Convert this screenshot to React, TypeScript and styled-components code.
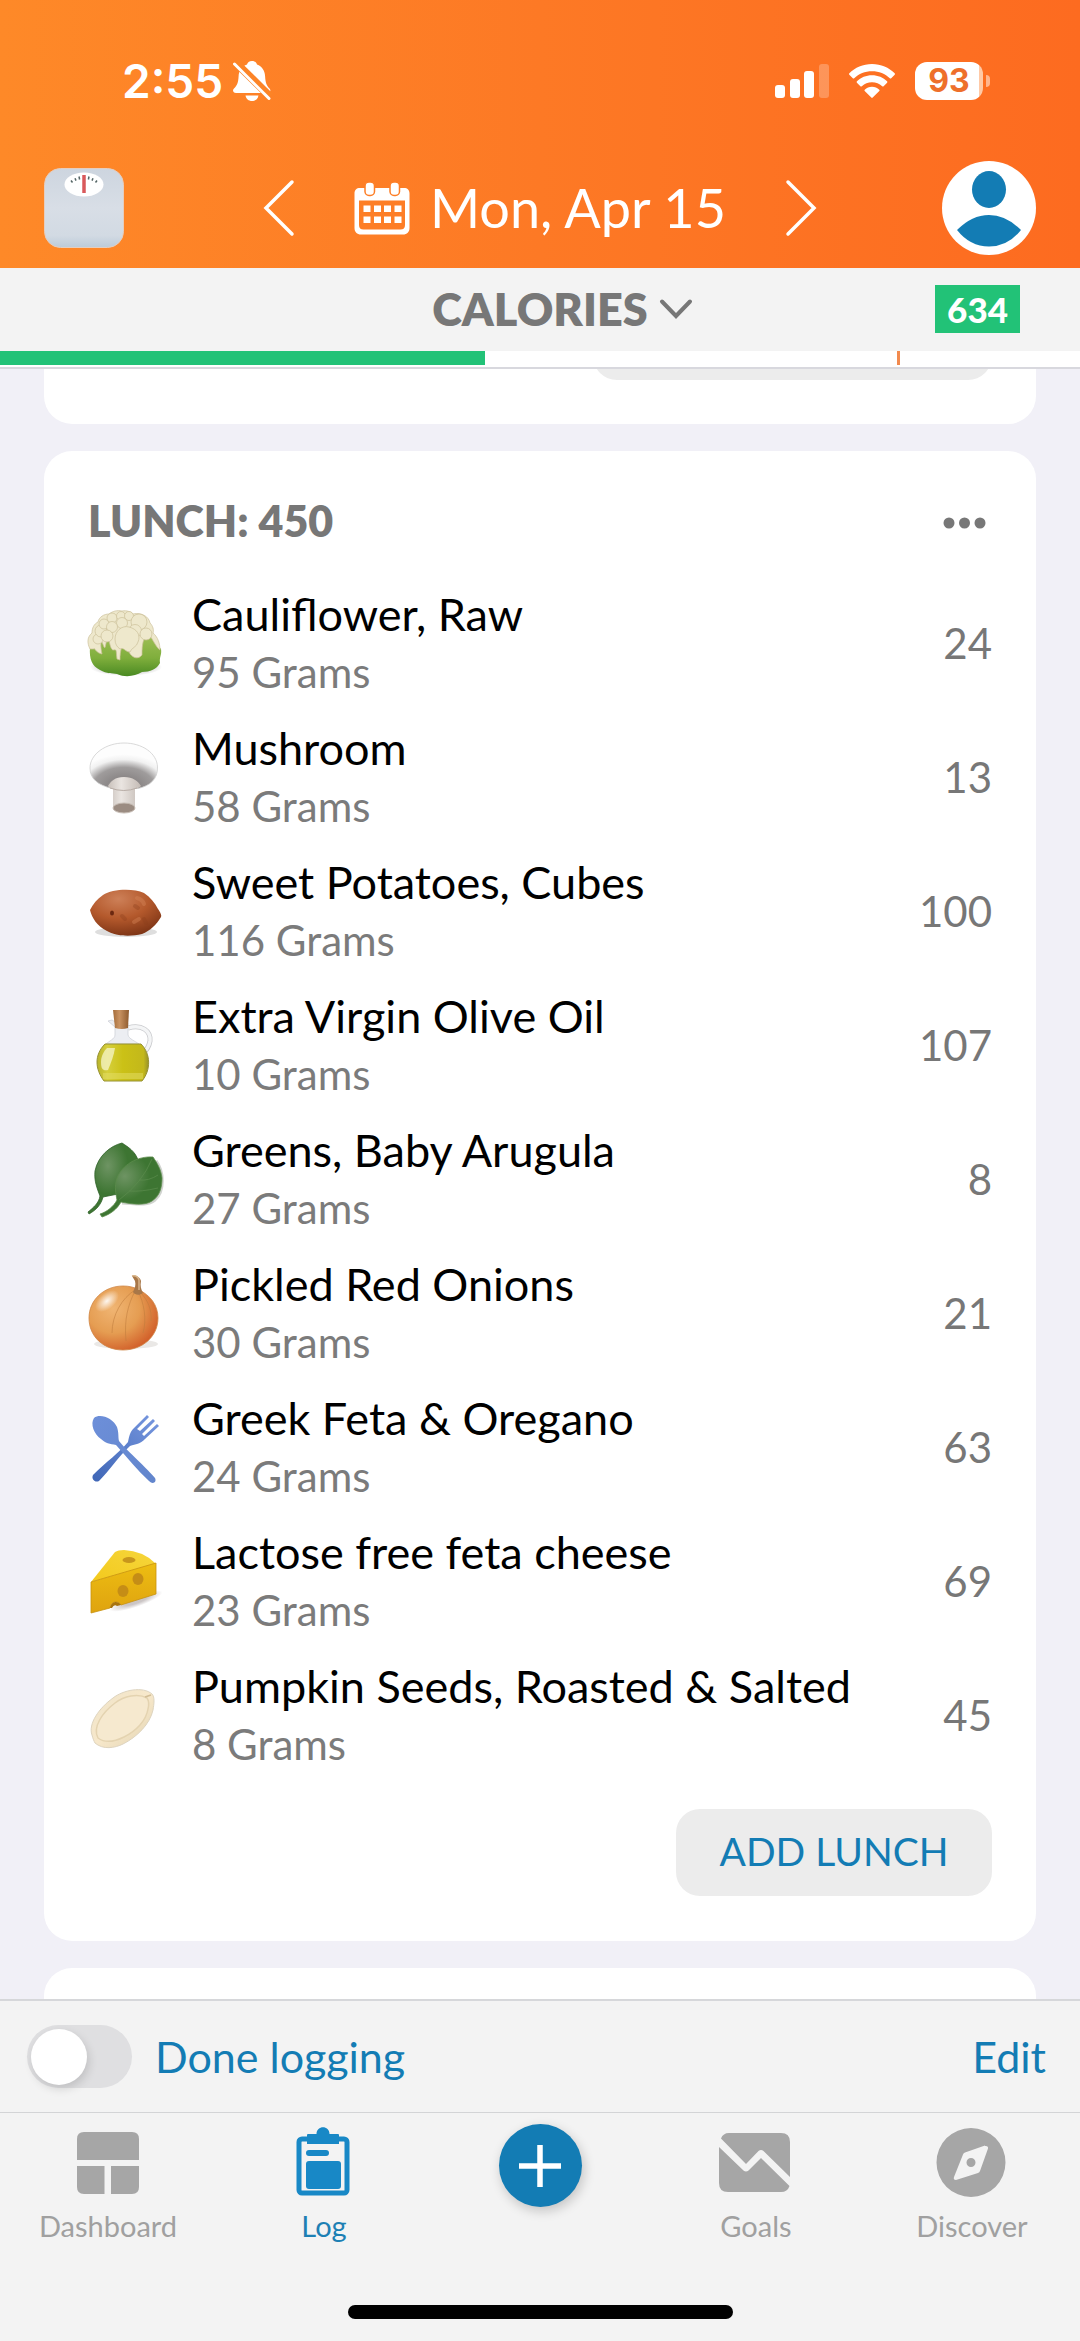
import React from "react";
import styled, { createGlobalStyle } from "styled-components";

const blue = "#137cb4";
const green = "#22c277";

const GlobalStyle = createGlobalStyle`
  *, *::before, *::after { box-sizing: border-box; }
  body { margin: 0; background: #f1f0f7; font-family: Lato, "Open Sans", sans-serif; color: #000; }
  button { font: inherit; color: inherit; border: 0; padding: 0; background: none; cursor: pointer; }
  svg { display: block; flex: none; overflow: visible; }
`;

const Screen = styled.div`
  height: 100vh;
  display: flex;
  flex-direction: column;
  overflow: hidden;
`;

const Header = styled.header`
  background: linear-gradient(90deg, #fe8928 0%, #fd7925 50%, #fd6b20 100%);
  color: #fff;
`;

const StatusBar = styled.div`
  display: flex;
  align-items: center;
  justify-content: space-between;
  height: 161px;
  padding: 0 90px 0 122px;
`;

const Clock = styled.div`
  display: flex;
  align-items: center;
  gap: 10px;
  font-family: Inter, sans-serif;
  font-size: 46px;
  font-weight: 600;
  line-height: 56px;
`;

const StatusIcons = styled.div`
  display: flex;
  align-items: center;
  gap: 20px;
`;

const Battery = styled.div`
  display: flex;
  align-items: center;
  gap: 3px;
`;

const BatteryBody = styled.div`
  width: 68px;
  height: 38px;
  border-radius: 12px;
  background: linear-gradient(90deg, #fff 94%, #ffc9a6 94%);
  color: #ee6f2b;
  font: 700 32px/38px Inter, sans-serif;
  text-align: center;
`;

const BatteryTip = styled.div`
  width: 4px;
  height: 12px;
  border-radius: 0 6px 6px 0;
  background: #ffb58d;
`;

const NavRow = styled.div`
  display: grid;
  grid-template-columns: 1fr auto 1fr;
  align-items: center;
  height: 107px;
  padding: 0 44px 14px;
`;

const DateNav = styled.div`
  display: flex;
  align-items: center;
  gap: 60px;
`;

const DateButton = styled.button`
  display: flex;
  align-items: center;
  gap: 20px;
  font-size: 54px;
  line-height: 60px;
`;

const ProfileButton = styled.button`
  justify-self: end;
`;

const SummaryBar = styled.section`
  background: #f3f3f3;
`;

const SummaryRow = styled.div`
  display: grid;
  grid-template-columns: 1fr auto 1fr;
  align-items: center;
  height: 83px;
  padding: 0 60px 2px;
`;

const MetricButton = styled.button`
  grid-column: 2;
  display: flex;
  align-items: center;
  gap: 12px;
  margin-left: 44px;
  color: #777;
  font-size: 45px;
  font-weight: 800;
  line-height: 52px;
`;

const Badge = styled.span`
  justify-self: end;
  padding: 0 12px;
  background: ${green};
  color: #fff;
  font-size: 35px;
  font-weight: 900;
  line-height: 48px;
`;

const Track = styled.div`
  position: relative;
  height: 18px;
  background: #fff;
  border-bottom: 2px solid #d8d8de;
`;

const TrackFill = styled.div`
  height: 14px;
  background: ${green};
`;

const TrackMark = styled.span`
  position: absolute;
  top: 0;
  width: 3px;
  height: 14px;
  background: #f28a4e;
`;

const Feed = styled.main`
  flex: 1;
  min-height: 0;
  display: flex;
  flex-direction: column;
  gap: 27px;
  padding: 0 44px;
  overflow: hidden;
`;

const Card = styled.section`
  flex: none;
  padding: 46px 44px 45px;
  border-radius: 28px;
  background: #fff;
`;

const ScrolledCard = styled(Card)`
  margin-top: -76px;
  padding-top: 0;
  padding-bottom: 44px;
`;

const NextCard = styled(Card)`
  min-height: 120px;
`;

const CardHead = styled.div`
  display: flex;
  align-items: center;
  justify-content: space-between;
  height: 48px;
  margin-bottom: 31px;
`;

const CardTitle = styled.h2`
  margin: 0;
  color: #777;
  font-size: 43px;
  font-weight: 800;
  line-height: 48px;
`;

const MoreButton = styled.button`
  padding: 4px 6px 0;
`;

const FoodList = styled.ul`
  margin: 0 0 27px;
  padding: 0;
  list-style: none;
`;

const FoodRow = styled.li`
  display: flex;
  align-items: center;
  gap: 28px;
  height: 134px;
`;

const FoodText = styled.div`
  flex: 1;
  min-width: 0;
`;

const FoodName = styled.div`
  font-size: 45px;
  line-height: 58px;
`;

const FoodAmount = styled.div`
  color: #7b7b7b;
  font-size: 42px;
  line-height: 58px;
`;

const FoodCalories = styled.div`
  color: #777;
  font-size: 42px;
  line-height: 58px;
`;

const CardActions = styled.div`
  display: flex;
  justify-content: flex-end;
`;

const AddButton = styled.button`
  min-width: 316px;
  height: 87px;
  padding: 0 36px 3px;
  border-radius: 24px;
  background: #ececec;
  color: ${blue};
  font-size: 39px;
  line-height: 48px;
`;

const AddButtonEdge = styled.div`
  width: 40%;
  min-width: 399px;
  height: 87px;
  border-radius: 24px;
  background: #ececec;
`;

const Footer = styled.footer`
  background: #f3f3f3;
`;

const LoggingBar = styled.div`
  display: flex;
  align-items: center;
  justify-content: space-between;
  height: 113px;
  padding: 0 34px 0 27px;
  border-top: 2px solid #d6d7da;
  color: ${blue};
  font-size: 43px;
  line-height: 52px;
`;

const ToggleLabel = styled.label`
  display: flex;
  align-items: center;
  gap: 23px;
`;

const Toggle = styled.input`
  appearance: none;
  display: flex;
  align-items: center;
  width: 105px;
  height: 63px;
  margin: 0;
  padding: 4px;
  border-radius: 32px;
  background: #dfdfe1;

  &::before {
    content: "";
    width: 56px;
    height: 56px;
    border-radius: 50%;
    background: #fff;
    box-shadow: 2px 4px 10px rgba(0, 0, 0, 0.14);
  }

  &:checked {
    justify-content: flex-end;
    background: ${green};
  }
`;

const TabBar = styled.nav`
  display: grid;
  grid-template-columns: repeat(5, 1fr);
  height: 193px;
  border-top: 1px solid #d3d4d6;
`;

const Tab = styled.a<{ $active?: boolean }>`
  display: flex;
  flex-direction: column;
  align-items: center;
  gap: 14px;
  padding-top: 9px;
  color: ${(p) => (p.$active ? "#1888c6" : "#a6a6a6")};
  font-size: 29px;
  line-height: 36px;
  text-decoration: none;
`;

const TabLabel = styled.span<{ $active?: boolean }>`
  color: ${(p) => (p.$active ? "#1d80b4" : "#a0a0a0")};
`;

const PlusButton = styled.button`
  justify-self: center;
  display: grid;
  place-items: center;
  width: 83px;
  height: 83px;
  margin-top: 11px;
  border-radius: 50%;
  background: ${blue};
  box-shadow: 2px 4px 12px rgba(0, 0, 0, 0.2);
`;

const HomeIndicator = styled.div`
  width: 385px;
  height: 14px;
  margin: 0 auto 22px;
  border-radius: 7px;
  background: #000;
`;

const BellOff = () => (
  <svg width="38" height="40" viewBox="0 0 38 40" aria-hidden="true">
    <path d="M19 0c2.800 0 4.600 1.500 5 3.600 5 1.800 7.800 6 8.100 11.600.3 6.500 1.500 9.200 4.400 12.300.8.900 1 1.700.8 2.600-.3 1.200-1.300 1.900-2.800 1.900H3c-1.600 0-2.600-.7-2.900-1.900-.2-.9 0-1.700.9-2.600 3-3.100 4.300-5.800 4.600-12.300C5.900 9.600 9 5.400 14 3.600 14.400 1.500 16.200 0 19 0Z" fill="#fff" />
    <path d="M12.500 34.500h13c-.6 3.400-3 5.500-6.500 5.500s-5.900-2.100-6.500-5.500Z" fill="#fff" />
    <path d="M2 1 37 35.500" stroke="#fc8427" strokeWidth="8" />
    <path d="M1.500 3 36 37.500" stroke="#fff" strokeWidth="3" strokeLinecap="round" />
  </svg>
);

const Signal = () => (
  <svg width="54" height="34" viewBox="0 0 54 34" fill="#fff" aria-hidden="true">
    <rect x="0" y="21" width="10" height="13" rx="3" />
    <rect x="15" y="15" width="10" height="19" rx="3" />
    <rect x="29" y="7" width="10" height="27" rx="3" />
    <rect x="44" y="0" width="10" height="34" rx="3" opacity="0.25" />
  </svg>
);

const Wifi = () => (
  <svg width="46" height="34" viewBox="0 0 46 34" fill="#fff" aria-hidden="true">
    <path d="M23 0c9 0 17 3.500 22.700 9.300.4.400.4 1 0 1.400l-3.500 3.500c-.4.400-1 .4-1.400 0C36.200 9.800 30 7.200 23 7.200S9.800 9.800 5.200 14.200c-.4.400-1 .4-1.400 0L.3 10.700c-.4-.4-.4-1 0-1.400C6 3.500 14 0 23 0Z" />
    <path d="M23 11.300c5.900 0 11.200 2.300 15.100 6 .4.400.4 1 0 1.400l-3.500 3.500c-.4.400-1 .4-1.400 0A15 15 0 0 0 23 18.300a15 15 0 0 0-10.200 3.900c-.4.400-1 .4-1.400 0l-3.500-3.500c-.4-.4-.4-1 0-1.400 3.900-3.700 9.200-6 15.100-6Z" />
    <path d="M23 22.800c2.800 0 5.400 1.100 7.300 2.900.4.400.4.900 0 1.300l-6.600 6.600c-.4.400-1 .4-1.400 0L15.700 27c-.4-.4-.4-.9 0-1.300 1.900-1.800 4.500-2.900 7.300-2.900Z" />
  </svg>
);

const ScaleIcon = () => (
  <svg width="80" height="80" viewBox="0 0 80 80" aria-hidden="true">
    <defs>
      <linearGradient id="scaleBody" x1="0" y1="0" x2="0" y2="1">
        <stop offset="0" stopColor="#cdd5df" />
        <stop offset="0.5" stopColor="#d8dee6" />
        <stop offset="0.85" stopColor="#d2dae3" />
        <stop offset="1" stopColor="#bccbd9" />
      </linearGradient>
    </defs>
    <rect x="0.500" y="0.500" width="79" height="79" rx="16" fill="url(#scaleBody)" stroke="#e6cdbd" />
    <ellipse cx="40" cy="16.500" rx="19.500" ry="12" fill="#fff" />
    <path d="M27 12.500l1.500 2M31 10.200l1 2.400M35 8.500l.6 3M53 12.500l-1.500 2M49 10.200l-1 2.400M45 8.500l-.6 3" stroke="#566" strokeWidth="1.500" />
    <path d="M40 7v18" stroke="#d9595b" strokeWidth="3.500" />
  </svg>
);

const Chevron = ({ flip }: { flip?: boolean }) => (
  <svg width="30" height="56" viewBox="0 0 30 56" aria-hidden="true">
    <path d={flip ? "M2 2 28 28 2 54" : "M28 2 2 28 28 54"} fill="none" stroke="#fff" strokeWidth="3.500" strokeLinecap="round" />
  </svg>
);

const CalendarIcon = () => (
  <svg width="56" height="53" viewBox="0 0 56 53" aria-hidden="true">
    <path fillRule="evenodd" d="M6 6h44c3.500 0 5.500 2 5.500 5.500V46c0 4-2.500 6.500-6.500 6.500H7C3 52.500.5 50 .5 46V11.500C.5 8 2.500 6 6 6ZM5 18.500V43c0 3 1.500 4.500 4.500 4.500h37c3 0 4.500-1.500 4.500-4.500V18.500Z" fill="#fff" />
    <g fill="#fff" stroke="#fd7e26" strokeWidth="1.500">
      <rect x="11" y="0" width="9.500" height="13.500" rx="4" />
      <rect x="36" y="0" width="9.500" height="13.500" rx="4" />
    </g>
    <path d="M9.500 23.500h7v6.500h-7zM20 23.500h7v6.500h-7zM30 23.500h7v6.500h-7zM40.500 23.500h7v6.500h-7zM9.500 34.500h7V41h-7zM20 34.500h7V41h-7zM30 34.500h7V41h-7zM40.500 34.500h7V41h-7z" fill="#fff" />
  </svg>
);

const AvatarIcon = () => (
  <svg width="94" height="94" viewBox="0 0 94 94" aria-hidden="true">
    <circle cx="47" cy="47" r="47" fill="#fff" />
    <ellipse cx="47" cy="28.500" rx="17" ry="18.500" fill={blue} />
    <path d="M15 69Q30 54 47 54T79 69Q66 85.500 47 85.500T15 69Z" fill={blue} />
  </svg>
);

const ChevronDown = () => (
  <svg width="32" height="20" viewBox="0 0 32 20" aria-hidden="true">
    <path d="M2 2.500 16 17 30 2.500" fill="none" stroke="#777" strokeWidth="4" strokeLinecap="round" />
  </svg>
);

const MoreIcon = () => (
  <svg width="43" height="12" viewBox="0 0 43 12" fill="#777" aria-hidden="true">
    <circle cx="6" cy="6" r="5.500" />
    <circle cx="21.500" cy="6" r="5.500" />
    <circle cx="37" cy="6" r="5.500" />
  </svg>
);

const FoodSvg = ({ children }: { children: React.ReactNode }) => (
  <svg width="76" height="76" viewBox="0 0 76 76" aria-hidden="true">{children}</svg>
);

const Cauliflower = () => (
  <FoodSvg>
    <defs>
      <linearGradient id="cfLeaf" x1="0" y1="0" x2="0" y2="1">
        <stop offset="0" stopColor="#a5c25a" />
        <stop offset="0.6" stopColor="#7fae3c" />
        <stop offset="1" stopColor="#4a8a22" />
      </linearGradient>
      <radialGradient id="cfShade">
        <stop offset="0.6" stopColor="#999" stopOpacity="0.5" />
        <stop offset="1" stopColor="#999" stopOpacity="0" />
      </radialGradient>
    </defs>
    <ellipse cx="38" cy="62" rx="36" ry="9" fill="url(#cfShade)" />
    <path d="M2 42C1 54 4 61 12 65c7 4 12 3 17 4 9 4 18 2 25-2 8 0 15-3 18-9-1-6 2-8 1-14L58 26 20 34Z" fill="url(#cfLeaf)" />
    <g fill="#eee8cc" stroke="#cbc09a" strokeWidth="0.700">
      <path d="M2 44C-1 38-1 32 4 28c0-5 2-9 6-11 1-5 6-8 11-8 4-3 8-4 13-3 5-1 9 1 11 3 9-2 16 3 17 9 3 3 4 7 3 10 5 4 7 11 7 17-4-2-9-15-12-16-5 4-6 10-6 21-4 5-10 3-13-3 2-5 5-6 4-8-4 2-7-2-8-1-3 3-5 6-5 17l-3-1c-1-7 0-10-3-9-4 1-4-9-6-11-3 3-2 11-4 8l-2-5c-2 0-1 7 0 12-6-1-8-7-8-5Z" />
      <circle cx="10" cy="34" r="5" /><circle cx="13" cy="26" r="6" /><circle cx="16" cy="19" r="5" />
      <circle cx="24" cy="13" r="5" /><circle cx="33" cy="11" r="4.500" /><circle cx="41" cy="11" r="4.500" />
      <circle cx="51" cy="17" r="8" /><circle cx="34" cy="18" r="5.500" /><circle cx="24" cy="22" r="5.500" />
      <circle cx="19" cy="31" r="6" /><circle cx="47" cy="26" r="6.500" /><circle cx="58" cy="29" r="6" />
      <path d="M27 34c0-8 7-14 14-12 8 2 12 8 9 15-1 5-7 6-8 10-5 0-6-5-10-3-3-2-5-5-5-10Z" />
    </g>
  </FoodSvg>
);

const Mushroom = () => (
  <FoodSvg>
    <defs>
      <radialGradient id="msCap" cx="0.500" cy="0.900" r="0.750" gradientTransform="translate(0 0.1)">
        <stop offset="0" stopColor="#b5b1b0" />
        <stop offset="0.350" stopColor="#8d8989" />
        <stop offset="0.620" stopColor="#9f9c9c" />
        <stop offset="0.850" stopColor="#f1f1f1" />
        <stop offset="1" stopColor="#fdfdfd" />
      </radialGradient>
      <linearGradient id="msStem">
        <stop offset="0" stopColor="#c9c1bb" />
        <stop offset="0.4" stopColor="#eae5e1" />
        <stop offset="1" stopColor="#c4bbb5" />
      </linearGradient>
    </defs>
    <path d="M36 4C18 4 2 15 2 29c0 11 8 17 22 20.500h26C62 47 70 40 69.500 28 69 14 54 4 36 4Z" fill="url(#msCap)" stroke="#cfcfcf" strokeWidth="0.800" />
    <path d="M20 47c3-5 7-9 16-9s14 4 17 9c-2 2-5 3-6 3v20c-3 4-19 4-22 0V50c-2-1-4-1-5-3Z" fill="url(#msStem)" />
    <ellipse cx="36" cy="69" rx="11" ry="5" fill="#9b8c82" stroke="#c7bdb5" />
    <path d="M22 49q14 5 27 0" fill="none" stroke="#b8ada6" />
  </FoodSvg>
);

const SweetPotato = () => (
  <FoodSvg>
    <defs>
      <radialGradient id="spSkin" cx="0.400" cy="0.200" r="0.850">
        <stop offset="0" stopColor="#cd8058" />
        <stop offset="0.5" stopColor="#b4592c" />
        <stop offset="1" stopColor="#7a3214" />
      </radialGradient>
    </defs>
    <ellipse cx="38" cy="59" rx="31" ry="5" fill="#dedede" />
    <path d="M2 37C5 31 9 26 15 22c9-6 30-7 41-2 6 4 11 10 14 16 2 3 4 6 3 8-4 7-11 14-19 17-12 3-27 2-35-3C9 53 4 45 2 37Z" fill="url(#spSkin)" />
    <ellipse cx="24" cy="40" rx="2" ry="2.500" fill="#6b2810" />
    <path d="M34 43l3 3M47 33l3 2M56 46l2 4" stroke="#8c3f1c" strokeWidth="4" strokeLinecap="round" opacity="0.350" />
    <path d="M49 25c4 1 6 3 7 6M46 49l5-3" stroke="#d78859" strokeWidth="4" strokeLinecap="round" opacity="0.400" fill="none" />
  </FoodSvg>
);

const OliveOil = () => (
  <FoodSvg>
    <defs>
      <linearGradient id="oilFill">
        <stop offset="0" stopColor="#b8b32a" />
        <stop offset="0.200" stopColor="#d6cf3c" />
        <stop offset="0.500" stopColor="#cbc116" />
        <stop offset="0.900" stopColor="#c3b81b" />
        <stop offset="1" stopColor="#97922a" />
      </linearGradient>
      <linearGradient id="oilCork">
        <stop offset="0" stopColor="#a56d3a" />
        <stop offset="0.400" stopColor="#c99362" />
        <stop offset="1" stopColor="#8f5b2e" />
      </linearGradient>
    </defs>
    <path d="M40 21c14-4 23 3 22 13-1 6-4 10-8 13" fill="none" stroke="#c8c9cc" strokeWidth="5" />
    <path d="M40 21c14-4 23 3 22 13-1 6-4 10-8 13" fill="none" stroke="#f4f5f6" strokeWidth="3.500" />
    <path d="M27 20 20 14l4-1 5 3h11v12c1 4 7 6 11 9H18c3-3 9-5 9-9Z" fill="#eceef2" stroke="#cfd2d8" strokeWidth="0.800" />
    <path d="M17 37h36c10 10 10 26 1 37H16C7 62 6 48 17 37Z" fill="url(#oilFill)" stroke="#969133" strokeWidth="1" />
    <path d="M15 69h40" stroke="#e5df68" strokeWidth="6" opacity="0.500" />
    <path d="M19 41h8c-1 7-4 15-7 22-5 1-7-1-7-8 0-6 3-11 6-14Z" fill="#f4f2c0" opacity="0.800" />
    <path d="M25 3h16l-1 18q-6 2-13 0Z" fill="url(#oilCork)" />
  </FoodSvg>
);

const Leaves = () => (
  <FoodSvg>
    <defs>
      <radialGradient id="leafA" cx="0.400" cy="0.320" r="0.400">
        <stop offset="0" stopColor="#6e9463" />
        <stop offset="1" stopColor="#3d7532" />
      </radialGradient>
    </defs>
    <path d="M68 20c8 10 9 30-1 39-9 7-22 3-33 3" fill="none" stroke="#8a9188" strokeWidth="3" opacity="0.400" />
    <path d="M34 2C22 5 10 15 7 30c-1 10 2 17 5 25-1 7-7 12-12 16l1 2c7-4 12-9 14-17l15-3 20-34C47 10 40 6 34 2Z" fill="url(#leafA)" stroke="#2f6128" strokeWidth="0.800" />
    <path d="M65 16c-16-1-31 8-36 21-3 9-1 16 0 22-3 6-10 12-17 14l2 3c9-3 15-8 19-15 10 2 24 4 31-1 8-5 10-14 10-23-1-9-5-15-9-21Z" fill="url(#leafA)" stroke="#5c8b4b" strokeWidth="0.800" />
    <path d="M31 59Q54 42 64 18M41 50q12 1 29-3M51 39q10 1 19-5" fill="none" stroke="#5c8d4d" strokeWidth="0.700" />
  </FoodSvg>
);

const Onion = () => (
  <FoodSvg>
    <defs>
      <radialGradient id="onSkin" cx="0.350" cy="0.350" r="0.700">
        <stop offset="0" stopColor="#f0b573" />
        <stop offset="0.550" stopColor="#e59d52" />
        <stop offset="1" stopColor="#d2602a" />
      </radialGradient>
      <radialGradient id="onShine">
        <stop offset="0" stopColor="#fff" stopOpacity="0.900" />
        <stop offset="1" stopColor="#fff" stopOpacity="0" />
      </radialGradient>
    </defs>
    <ellipse cx="38" cy="69" rx="32" ry="5" fill="#eae8e6" />
    <path d="M35 11C16 11 1 25 1 43c0 19 15 32 34 32s35-13 35-32C70 30 62 20 51 15c-5-3-10-4-16-4Z" fill="url(#onSkin)" stroke="#cf8646" strokeWidth="0.800" />
    <path d="M47 15C34 23 24 40 24 58M47 16c-7 14-11 28-9 50M50 16c6 12 9 28 5 42M52 17c8 8 12 18 11 29" fill="none" stroke="#bd7b3b" strokeWidth="0.900" opacity="0.600" />
    <ellipse cx="19" cy="26" rx="14" ry="8" transform="rotate(-40 19 26)" fill="url(#onShine)" />
    <path d="M44 1c4-1 8 1 9 5-1 5 0 8 2 12-4 3-8 2-10-1 2-4 3-7 2-11Z" fill="#a87748" />
    <path d="M44 1c4-1 6 1 7 4v10" stroke="#d8b489" strokeWidth="1.500" fill="none" />
  </FoodSvg>
);

const Utensils = () => (
  <FoodSvg>
    <defs>
      <linearGradient id="utA" x1="0" y1="0" x2="1" y2="1">
        <stop offset="0" stopColor="#6d8fd9" />
        <stop offset="1" stopColor="#6285cc" />
      </linearGradient>
      <linearGradient id="utB" x1="1" y1="0" x2="0" y2="1">
        <stop offset="0" stopColor="#7898e0" />
        <stop offset="1" stopColor="#3f66b6" />
      </linearGradient>
    </defs>
    <path d="M59 6 45 20c-4 5-4 9-5 13C31 44 19 52 5 66c-2 4 2 8 6 6C22 61 30 48 42 37c6-2 10-2 15-7L71 17l-2-2-13 12-2-2L67 12l-2-2-13 12-3-2L61 8Z" fill="url(#utB)" />
    <path d="M6 9c6-5 19 0 23 9 2 6 1 10 2 14 6 8 24 23 36 37 2 4-2 7-6 3C49 61 39 48 28 36c-6-1-11-2-15-6C6 25 2 15 6 9Z" fill="url(#utA)" />
  </FoodSvg>
);

const Cheese = () => (
  <FoodSvg>
    <defs>
      <linearGradient id="chTop" x1="0" y1="1" x2="1" y2="0">
        <stop offset="0" stopColor="#f3c91c" />
        <stop offset="1" stopColor="#f6d63c" />
      </linearGradient>
      <linearGradient id="chFront" x1="0" y1="0" x2="0" y2="1">
        <stop offset="0" stopColor="#edbd12" />
        <stop offset="1" stopColor="#dfa30f" />
      </linearGradient>
      <radialGradient id="chShade">
        <stop offset="0.400" stopColor="#b5adad" stopOpacity="0.700" />
        <stop offset="1" stopColor="#b5adad" stopOpacity="0" />
      </radialGradient>
    </defs>
    <ellipse cx="48" cy="58" rx="28" ry="6" transform="rotate(-19 48 58)" fill="url(#chShade)" />
    <path d="M3 39 27 9q3-2 9-2 19 1 31 13l1 1Z" fill="url(#chTop)" />
    <path d="M3 39 68 20v31L33 62c-3-5-10-4-11 3L3 70Z" fill="url(#chFront)" stroke="#c8920f" strokeWidth="0.800" />
    <ellipse cx="41" cy="17" rx="6.500" ry="3" fill="#c8961c" />
    <ellipse cx="50" cy="36" rx="5.500" ry="6" fill="#c58d16" />
    <ellipse cx="35" cy="48" rx="5.500" ry="6" fill="#c58d16" />
    <path d="M22 65c1-7 8-8 11-3l-4 1q-3-2-5 2Z" fill="#a8740f" />
  </FoodSvg>
);

const Seed = () => (
  <FoodSvg>
    <defs>
      <linearGradient id="seed" x1="0" y1="0" x2="1" y2="1">
        <stop offset="0" stopColor="#efe3c8" />
        <stop offset="0.500" stopColor="#f7e8cb" />
        <stop offset="1" stopColor="#e2d3b0" />
      </linearGradient>
    </defs>
    <path d="M7 66c8 7 20 5 28 1 14-7 27-20 30-34 1-6 2-13-1-16C55 9 35 13 25 21 11 31 0 47 4 58c1 4 2 6 3 8Z" fill="url(#seed)" stroke="#ded4bf" strokeWidth="1" />
    <path d="M10 61c8 6 18 3 26-1 12-6 22-16 24-28 1-4 1-8-1-11-9-5-23-2-32 5C15 35 4 50 10 61Z" fill="#f6e9cf" stroke="#e4d3b0" strokeWidth="1.500" />
    <path d="M57 20l6-2" stroke="#d3be96" strokeWidth="1.500" />
  </FoodSvg>
);

const DashboardIcon = () => (
  <svg width="72" height="72" viewBox="0 0 72 72" fill="currentColor" aria-hidden="true">
    <path d="M5 38V17q0-7 7-7h48q7 0 7 7v21Z" />
    <path d="M5 44h27.500v28H12q-7 0-7-7ZM39 44h28v21q0 7-7 7H39Z" />
  </svg>
);

const LogIcon = () => (
  <svg width="72" height="72" viewBox="1 0 72 72" aria-hidden="true">
    <rect x="12" y="17" width="48" height="54" rx="3" fill="none" stroke="currentColor" strokeWidth="5" />
    <path d="M20 22V13q0-1 1-1h8.500c0-9 13-9 13 0H51q1 0 1 1v9Z" fill="currentColor" />
    <rect x="19" y="28" width="23" height="6" rx="3" fill="currentColor" />
    <rect x="19" y="39" width="35" height="28" rx="3" fill="currentColor" />
  </svg>
);

const GoalsIcon = () => (
  <svg width="72" height="72" viewBox="1 0 72 72" fill="currentColor" aria-hidden="true">
    <path d="M2 16.500Q4 11 10 11h52q9 0 9 9v35L44.500 29q-2.500-2-5 0L27 42Z" />
    <path d="M0 25 24.500 48.500q2.500 2 5 0L42 36l28.500 28q-2 6-8.500 6H9q-9 0-9-9Z" />
  </svg>
);

const DiscoverIcon = () => (
  <svg width="72" height="72" viewBox="1 0 72 72" fill="currentColor" aria-hidden="true">
    <path fillRule="evenodd" d="M36 6a34.500 34.500 0 1 1 0 69 34.500 34.500 0 0 1 0-69ZM50 23.500 30 30.500q-1.500.5-2 2L19 55q-1 3 2 3l22-7q1.500-.5 2-2l8-22.500q.5-3-3-2.500ZM36 36a4.500 4.500 0 1 1 0 9 4.500 4.500 0 0 1 0-9Z" />
  </svg>
);

const PlusIcon = () => (
  <svg width="42" height="42" viewBox="0 0 42 42" aria-hidden="true">
    <path d="M21 0v42M0 21h42" stroke="#fff" strokeWidth="5.500" />
  </svg>
);

const foods = [
  { name: "Cauliflower, Raw", amount: "95 Grams", calories: 24, Icon: Cauliflower },
  { name: "Mushroom", amount: "58 Grams", calories: 13, Icon: Mushroom },
  { name: "Sweet Potatoes, Cubes", amount: "116 Grams", calories: 100, Icon: SweetPotato },
  { name: "Extra Virgin Olive Oil", amount: "10 Grams", calories: 107, Icon: OliveOil },
  { name: "Greens, Baby Arugula", amount: "27 Grams", calories: 8, Icon: Leaves },
  { name: "Pickled Red Onions", amount: "30 Grams", calories: 21, Icon: Onion },
  { name: "Greek Feta & Oregano", amount: "24 Grams", calories: 63, Icon: Utensils },
  { name: "Lactose free feta cheese", amount: "23 Grams", calories: 69, Icon: Cheese },
  { name: "Pumpkin Seeds, Roasted & Salted", amount: "8 Grams", calories: 45, Icon: Seed },
];

const progress = { eaten: 44.9, mark: 83.1 };

export default function App() {
  return (
    <Screen>
      <GlobalStyle />
      <Header>
        <StatusBar>
          <Clock>2:55<BellOff /></Clock>
          <StatusIcons>
            <Signal />
            <Wifi />
            <Battery>
              <BatteryBody>93</BatteryBody>
              <BatteryTip />
            </Battery>
          </StatusIcons>
        </StatusBar>
        <NavRow>
          <button aria-label="Weigh in"><ScaleIcon /></button>
          <DateNav>
            <button aria-label="Previous day"><Chevron /></button>
            <DateButton><CalendarIcon />Mon, Apr 15</DateButton>
            <button aria-label="Next day"><Chevron flip /></button>
          </DateNav>
          <ProfileButton aria-label="Profile"><AvatarIcon /></ProfileButton>
        </NavRow>
      </Header>

      <SummaryBar>
        <SummaryRow>
          <MetricButton>CALORIES<ChevronDown /></MetricButton>
          <Badge>634</Badge>
        </SummaryRow>
        <Track>
          <TrackFill style={{ width: `${progress.eaten}%` }} />
          <TrackMark style={{ left: `${progress.mark}%` }} />
        </Track>
      </SummaryBar>

      <Feed>
        <ScrolledCard>
          <CardActions><AddButtonEdge /></CardActions>
        </ScrolledCard>
        <Card>
          <CardHead>
            <CardTitle>LUNCH: 450</CardTitle>
            <MoreButton aria-label="More options"><MoreIcon /></MoreButton>
          </CardHead>
          <FoodList>
            {foods.map(({ name, amount, calories, Icon }) => (
              <FoodRow key={name}>
                <Icon />
                <FoodText>
                  <FoodName>{name}</FoodName>
                  <FoodAmount>{amount}</FoodAmount>
                </FoodText>
                <FoodCalories>{calories}</FoodCalories>
              </FoodRow>
            ))}
          </FoodList>
          <CardActions><AddButton>ADD LUNCH</AddButton></CardActions>
        </Card>
        <NextCard />
      </Feed>

      <Footer>
        <LoggingBar>
          <ToggleLabel htmlFor="done"><Toggle type="checkbox" id="done" />Done logging</ToggleLabel>
          <button>Edit</button>
        </LoggingBar>
        <TabBar>
          <Tab href="#dashboard"><DashboardIcon /><TabLabel>Dashboard</TabLabel></Tab>
          <Tab href="#log" $active><LogIcon /><TabLabel $active>Log</TabLabel></Tab>
          <PlusButton aria-label="Add"><PlusIcon /></PlusButton>
          <Tab href="#goals"><GoalsIcon /><TabLabel>Goals</TabLabel></Tab>
          <Tab href="#discover"><DiscoverIcon /><TabLabel>Discover</TabLabel></Tab>
        </TabBar>
        <HomeIndicator />
      </Footer>
    </Screen>
  );
}
